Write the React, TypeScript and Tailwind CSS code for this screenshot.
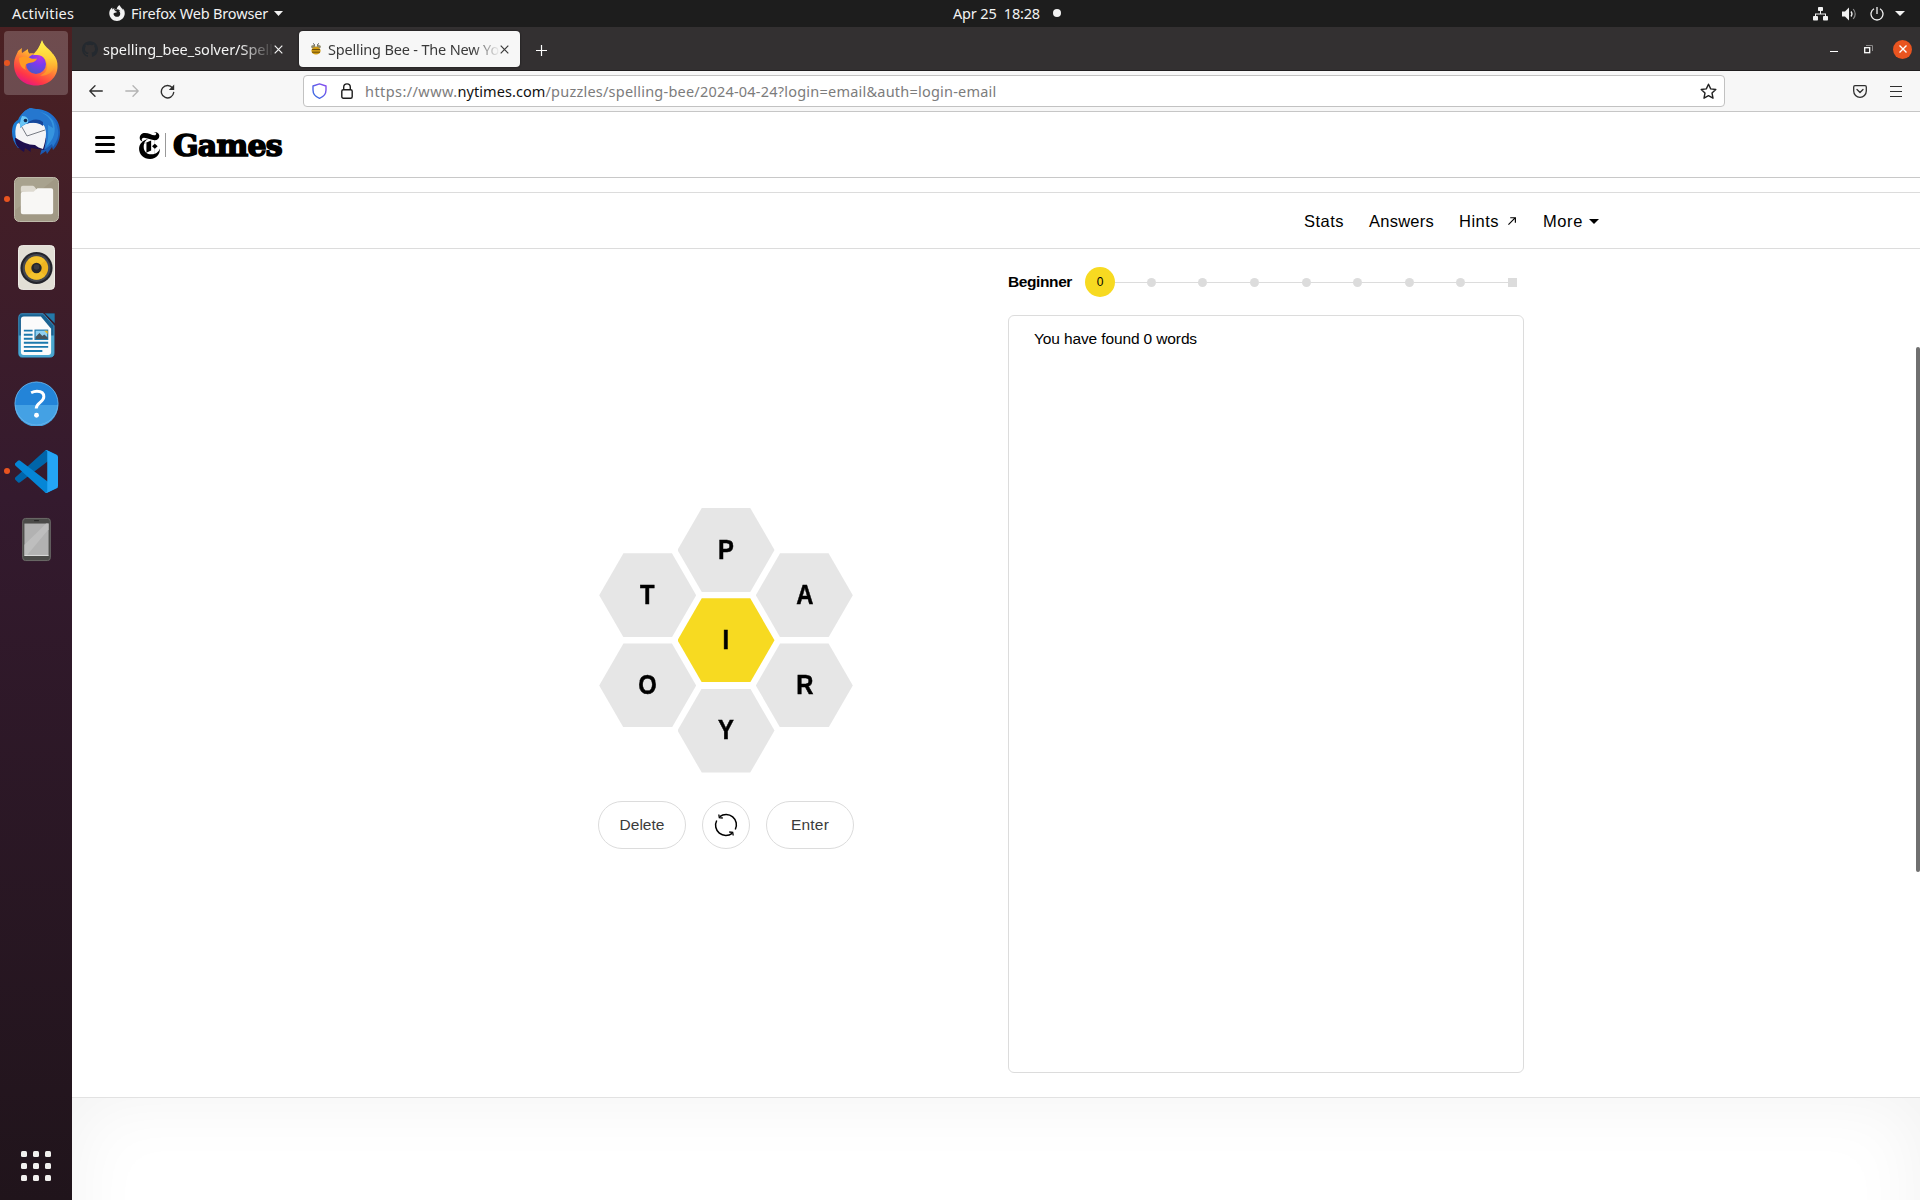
import { useLayoutEffect, useRef, useState } from "react";
import type { ReactNode } from "react";
import { SiNewyorktimes, SiFirefoxbrowser, SiGithub } from "react-icons/si";

const UI = "font-['Noto_Sans','Open_Sans',sans-serif]";
const FRANKLIN = "font-['Liberation_Sans',sans-serif]";

/* Sets text to a fixed measure by spreading the difference over its letters. */
function Fit({ width, className = "", children }: { width: number; className?: string; children: ReactNode }) {
  const ref = useRef<HTMLSpanElement>(null);
  const [spacing, setSpacing] = useState(0);
  useLayoutEffect(() => {
    const el = ref.current;
    if (!el) return;
    const n = (el.textContent || "").length;
    setSpacing((width - el.getBoundingClientRect().width) / n);
  }, [width]);
  return (
    <span ref={ref} className={`inline-block shrink-0 whitespace-pre ${className}`} style={{ letterSpacing: spacing }}>
      {children}
    </span>
  );
}

function TopBar() {
  return (
    <div className={`grid h-[27px] shrink-0 grid-cols-3 items-center bg-[#1d1d1d] text-[14.5px] leading-[24px] text-[#f2f2f2] ${UI}`}>
      <div className="flex h-[27px] items-center pl-3">
        <Fit width={62} className="-mt-[2px]">Activities</Fit>
        <SiFirefoxbrowser className="-mt-px ml-[35px] size-4" />
        <Fit width={137} className="-mt-[2px] ml-[6px]">Firefox Web Browser</Fit>
        <svg className="ml-[6px] h-[5px] w-[9px]" viewBox="0 0 9 5"><path d="M0 0h9L4.500 5z" fill="currentColor" /></svg>
      </div>
      <div className="flex h-[27px] items-center pl-[313px]">
        <Fit width={87} className="-mt-[2px]">Apr 25  18:28</Fit>
        <span className="-mt-px ml-[13px] size-2 rounded-full bg-[#f2f2f2]" />
      </div>
      <div className="flex h-[26px] items-center justify-end pr-[15px]">
        <svg className="h-[14px] w-[15px]" viewBox="0 0 15 14" fill="currentColor">
          <rect x="5" y="0" width="5" height="4" rx=".8" /><rect x="0" y="9" width="5" height="4.500" rx=".8" /><rect x="10" y="9" width="5" height="4.500" rx=".8" />
          <path d="M7 4h1v2.500h5V9h-1V7.500H3V9H2V6.500h5z" />
        </svg>
        <svg className="ml-[14px] h-[14px] w-[15px]" viewBox="0 0 15 14">
          <path d="M0 4.500h3L7 .5v13L3 9.500H0z" fill="currentColor" />
          <path d="M9 4.500q2 2.500 0 5" fill="none" stroke="currentColor" strokeWidth="1.300" />
          <path d="M11.200 2q4 5 0 10" fill="none" stroke="#8a8a8a" strokeWidth="1.200" />
        </svg>
        <svg className="ml-[13px] size-[14px]" viewBox="0 0 14 14" fill="none" stroke="currentColor" strokeWidth="1.300">
          <path d="M4 1.800a6 6 0 1 0 6 0M7 0v7" />
        </svg>
        <svg className="ml-[11px] h-[5px] w-[10px]" viewBox="0 0 10 5"><path d="M0 0h10L5 5z" fill="currentColor" /></svg>
      </div>
    </div>
  );
}

function FirefoxIcon() {
  return (
    <svg className="size-[46px]" viewBox="1 1 46 46">
      <defs>
        <linearGradient id="ff-body" x1=".75" y1=".1" x2=".3" y2="1">
          <stop offset="0" stopColor="#fff44f" /><stop offset=".28" stopColor="#ffbd2e" /><stop offset=".55" stopColor="#ff7139" /><stop offset=".8" stopColor="#ff3647" /><stop offset="1" stopColor="#e31587" />
        </linearGradient>
        <radialGradient id="ff-globe" cx=".7" cy=".15" r=".9">
          <stop offset="0" stopColor="#b833e1" /><stop offset=".45" stopColor="#7a3bee" /><stop offset="1" stopColor="#4b57c8" />
        </radialGradient>
        <linearGradient id="ff-tail" x1=".5" y1="0" x2=".5" y2="1">
          <stop offset="0" stopColor="#fff44f" /><stop offset=".5" stopColor="#ffd23a" /><stop offset="1" stopColor="#ff8a2b" />
        </linearGradient>
      </defs>
      <path d="M10 9c-.5 2-.2 3.500 0 5l6-4c-.2 2 .2 3 1.400 4.500 1.500-.4 3-.3 4.500 0 3-3 5-5 8.100-12.500 1 4 4 7 7 9.500 1 1 2 3 2 4.500l2-1c3.500 4 4.700 8 4.500 12.500C45.500 38 37 46.500 24 46.500S2 37.500 2 25.500C2 19 5 15 6 12z" fill="url(#ff-body)" />
      <circle cx="24" cy="25" r="10" fill="url(#ff-globe)" />
      <path d="M30 1c1 4 4 7 7 9.500 5 4.500 7 9 6 15-1.500 8.500-9 12-15 11 6-2 8-7 7-12-1-5-4-8-10-8.500-2-.2-2.500 0-4 .3C25 12 27.500 8 30 1z" fill="url(#ff-tail)" />
      <path d="M7 19c4-2 8-2 11 0 2 1 5 1 7 .5-1 3-4 4-8 4.500-4 .8-4.500 4-3 7-5-2-7-7-7-12z" fill="#ff9a22" />
    </svg>
  );
}

function ThunderbirdIcon() {
  return (
    <svg className="size-[48px]" viewBox="0 0 48 48">
      <defs>
        <linearGradient id="tb-body" x1="0" y1="0" x2="1" y2="1">
          <stop offset="0" stopColor="#1b8ad8" /><stop offset=".5" stopColor="#1f6fd0" /><stop offset="1" stopColor="#174a9c" />
        </linearGradient>
      </defs>
      <path d="M6 13C9 6 14 3 18 1l3 1c13-1 27 7 27 23 0 8-3 14-7 18l-1-3-5 7-1-3-6 4 2-7H6C2 36 0 31 0 25c0-6 2-10 6-12z" fill="url(#tb-body)" />
      <path d="M3 31c0 7 4 11 9 14l1-4 6 4c-1-2 0-3 0-4l14 2 2-12z" fill="#1d0e4e" />
      <path d="M5 17c6-4 22-2 28 2 2 6 1 14-2 23-3-1-6-2-8-4-7 0-13-3-19-7-1-5-1-9 1-14z" fill="#f4f4f6" />
      <path d="M7 15l8 14 18-6" fill="none" stroke="#777b84" strokeWidth="1" />
      <path d="M19 1C11 3 8 9 9 15l-1 6c5-5 12-7 23-4 4 5 4 14 1 26l8-6 1 3c4-6 6-10 5-17C44 10 33 3 19 1z" fill="#2577cf" />
      <path d="M14 17c6-2 12-2 17 2v-4c-5-4-12-3-17 2z" fill="#16479b" />
      <path d="M10 9C8 13 8 17 8 21c3-3 5-4 8-5 1-4-1-7-6-7z" fill="#67c5f5" />
      <path d="M28 5c8 3 12 8 13 16l-5-3c0 8 1 14-2 22 8-8 11-16 7-26-3-5-8-8-13-9z" fill="#3fa4e8" opacity=".65" />
      <circle cx="13.500" cy="13.500" r="1.800" fill="#102a51" />
    </svg>
  );
}

function FilesIcon() {
  return (
    <svg className="size-[45px]" viewBox="0 0 46 46">
      <rect x=".5" y=".5" width="45" height="45" rx="5" fill="#a19985" stroke="#c2bdad" />
      <path d="M5 1h38L1 34V6z" fill="#aea895" opacity=".6" />
      <path d="M7 15v-4q0-2 2-2h10q1 0 2 1l3 4h13q2 0 2 2z" fill="#dedad0" />
      <path d="M9 15h11l4-3.500h14q2 0 2 2V36q0 2-2 2H9q-2 0-2-2V17q0-2 2-2z" fill="#f8f7f5" />
    </svg>
  );
}

function RhythmboxIcon() {
  return (
    <svg className="h-[45px] w-[37px]" viewBox="0 0 38 46">
      <rect x=".5" y=".5" width="37" height="45" rx="4" fill="#e2dfd6" stroke="#f1efe9" />
      <circle cx="19" cy="23.500" r="16.500" fill="#23242b" />
      <circle cx="19" cy="23.500" r="14.300" fill="#454850" />
      <circle cx="19" cy="23.500" r="12" fill="#efb521" />
      <path d="M19 23.500L10 15.500a12 12 0 0 1 18 0zM19 23.500l-9 8a12 12 0 0 0 18 0z" fill="#f7cb34" opacity=".6" />
      <circle cx="19" cy="23.500" r="5.300" fill="#26272b" />
      <circle cx="19" cy="22.500" r="2.800" fill="#3b3c40" />
    </svg>
  );
}

function WriterIcon() {
  return (
    <svg className="h-[45px] w-[37px]" viewBox="0 0 38 46">
      <path d="M4 .7h22L37 13v28q0 4.200-4 4.200H4Q.8 45.200.8 41V5Q.8.700 4 .7z" fill="#1a6291" stroke="#3c93c3" />
      <path d="M.8 23H37v18q0 4.200-4 4.200H4Q.8 45.200.8 41z" fill="#4aa6cf" />
      <path d="M6 3.500h17.500L34 16v24q0 3-3 3H6q-3 0-3-3V6.500q0-3 3-3z" fill="#fbfbfb" />
      <path d="M27 0h11v11z" fill="#2478a8" stroke="#2c1629" strokeWidth=".6" />
      <path d="M6 17h9v2H6zM6 21.200h9v2H6zM6 25.400h9v2H6zM6 29.500h25v2H6zM6 33.700h25v2H6zM6 38h19v2H6z" fill="#1b79ad" />
      <rect x="17.500" y="17.500" width="13" height="9.500" fill="#8fd0f1" stroke="#1b79ad" strokeWidth="1.200" />
      <path d="M18 26.500v-2l4-4 3 3 2-1.500 3.500 3v1.500z" fill="#47555d" /><path d="M27 18h3.500v3.500z" fill="#f3b71d" />
    </svg>
  );
}

function HelpIcon() {
  return (
    <svg className="size-[45px]" viewBox="0 0 46 46">
      <circle cx="23" cy="23" r="22.200" fill="#2384d8" />
      <path d="M.8 24.500h44.400a22.200 22.200 0 0 1-44.400 0z" fill="#44a1e4" />
      <circle cx="23" cy="23" r="22" fill="none" stroke="#6fb7ea" strokeWidth=".8" />
      <path d="M17.500 12q3-1.500 6-1.500c4.500 0 7 2.300 7 5.600 0 5.400-7.800 6-7.800 11.900" fill="none" stroke="#fff" strokeWidth="3" />
      <circle cx="23" cy="35" r="2.500" fill="#fff" />
    </svg>
  );
}

function CodeIcon() {
  return (
    <svg className="size-[43px]" viewBox="0 0 100 100">
      <path d="M96.500 10.800L75.900.9a6.200 6.200 0 0 0-7.100 1.200L1.300 63.600a4.200 4.200 0 0 0 0 6.200l5.500 5a4.200 4.200 0 0 0 5.300.2L93.400 13.400c2.700-2.100 6.600-.1 6.600 3.300v-.2c0-2.500-1.400-4.700-3.500-5.700z" fill="#0065a9" />
      <path d="M96.500 89.200l-20.600 9.900a6.200 6.200 0 0 1-7.100-1.200L1.300 36.400a4.200 4.200 0 0 1 0-6.200l5.500-5a4.200 4.200 0 0 1 5.300-.2l81.300 61.600c2.700 2.100 6.600.1 6.600-3.300v.2c0 2.500-1.400 4.700-3.500 5.700z" fill="#0586d6" />
      <path d="M75.900 99.100a6.200 6.200 0 0 1-7.100-1.200c2.300 2.300 6.200.7 6.200-2.600V4.700c0-3.300-3.900-4.900-6.200-2.600A6.200 6.200 0 0 1 75.900.9l20.600 9.900a6.200 6.200 0 0 1 3.500 5.600v67.200a6.200 6.200 0 0 1-3.500 5.600z" fill="#24a5f4" />
    </svg>
  );
}

function PhoneIcon() {
  return (
    <svg className="h-[45px] w-[29px]" viewBox="0 0 30 45">
      <rect x=".7" y=".7" width="28.600" height="43.600" rx="3" fill="#4b4b49" stroke="#6d6d6a" />
      <rect x="2.500" y="6" width="25" height="33" fill="#b2b2b2" />
      <path d="M2.500 39V28L25 6h2.500v6L5 39z" fill="#bebebe" />
      <path d="M2.500 39h25" stroke="#e2e2e2" /><path d="M12.500 3h5" stroke="#222" />
    </svg>
  );
}

const dockItems = [
  { icon: <FirefoxIcon />, running: true, active: true },
  { icon: <ThunderbirdIcon /> },
  { icon: <FilesIcon />, running: true },
  { icon: <RhythmboxIcon /> },
  { icon: <WriterIcon /> },
  { icon: <HelpIcon /> },
  { icon: <CodeIcon />, running: true },
  { icon: <PhoneIcon /> },
];

function Dock() {
  return (
    <div className="flex w-[72px] shrink-0 flex-col justify-between bg-linear-to-b from-[#4b2022] via-[#341a2e] via-40% to-[#20141b] pt-1 pb-[19px]">
      <div className="flex flex-col gap-1">
        {dockItems.map((item, i) => (
          <div key={i} className={`relative mx-1 flex h-16 items-center justify-center rounded ${item.active ? "bg-white/20" : ""}`}>
            {item.icon}
            {item.running && <span className="absolute left-0 top-[29px] size-[6px] rounded-full bg-[#e95420]" />}
          </div>
        ))}
      </div>
      <div className="mx-auto grid grid-cols-3 gap-[6px]">
        {Array.from({ length: 9 }, (_, i) => <span key={i} className="size-[6px] rounded-[1.5px] bg-[#f1f0ee]" />)}
      </div>
    </div>
  );
}

function Cross() {
  return <svg className="size-[9px] shrink-0" viewBox="0 0 9 9"><path d="M.7.700l7.600 7.600M8.300.700L.7 8.300" stroke="currentColor" strokeWidth="1.200" /></svg>;
}

function TabStrip() {
  return (
    <div className={`flex h-[44px] shrink-0 items-start border-b border-[#1f1d1e] bg-[#333031] pt-1 text-[14.5px] leading-9 ${UI}`}>
      <div className="flex h-9 w-[227px] items-center pl-[10px] text-[#f4f4f4]">
        <SiGithub className="size-[16px] shrink-0 text-[#24292f]" />
        <div className="ml-[5px] w-[171px] mask-r-from-80%">
          <Fit width={170}>spelling_bee_solver/Spell</Fit>
        </div>
        <Cross />
      </div>
      <div className="flex h-9 w-[221px] items-center rounded bg-[#f7f7f7] pl-3 text-[#3a3a3a] shadow-[0_0_2px_#111]">
        <svg className="h-[12px] w-[10px] shrink-0" viewBox="0 0 10 12">
          <path d="M3.500 3.500V1.500L2 .5M6.500 3.500V1.500L8 .5" stroke="#555" fill="none" />
          <ellipse cx="2.300" cy="3.800" rx="2.200" ry="1.700" fill="#8f8a6c" /><ellipse cx="7.700" cy="3.800" rx="2.200" ry="1.700" fill="#8f8a6c" />
          <ellipse cx="5" cy="7.700" rx="4.600" ry="3.900" fill="#cf9a14" />
          <path d="M1 6.500h8M1 9.200h8" stroke="#6b4d0a" />
        </svg>
        <div className="ml-[7px] w-[172px] mask-r-from-84% mask-r-to-100%">
          <Fit width={171}>Spelling Bee - The New Yo</Fit>
        </div>
        <Cross />
      </div>
      <svg className="mt-[14px] ml-4 size-[11px]" viewBox="0 0 11 11"><path d="M5.500 0v11M0 5.500h11" stroke="#fff" strokeWidth="1.200" /></svg>
      <div className="ml-auto flex h-9 items-center pr-2">
        <span className="mt-[5px] h-px w-2 bg-white" />
        <svg className="ml-[26px] size-[9px]" viewBox="0 0 9 9" fill="none"><path d="M2 .5h6.500V6" stroke="#8b8989" /><rect x=".7" y="2.700" width="5" height="5" stroke="#fff" strokeWidth="1.300" /></svg>
        <span className="ml-5 flex size-[19px] items-center justify-center rounded-full bg-[#e95420] text-white">
          <svg className="size-2" viewBox="0 0 8 8"><path d="M.5.500l7 7M7.500.500l-7 7" stroke="currentColor" strokeWidth="1.400" /></svg>
        </span>
      </div>
    </div>
  );
}

function Toolbar() {
  return (
    <div className="flex h-[41px] shrink-0 items-center border-b border-[#c6c6c6] bg-[#f7f7f7] text-[#2f2f2f]">
      <svg className="ml-[17px] h-3 w-[14px]" viewBox="0 0 14 12" fill="none" stroke="currentColor" strokeWidth="1.300" strokeLinecap="round" strokeLinejoin="round"><path d="M6 .7L.8 6 6 11.300M.8 6h12.500" /></svg>
      <svg className="ml-[22px] h-3 w-[14px] text-[#b4b4b4]" viewBox="0 0 14 12" fill="none" stroke="currentColor" strokeWidth="1.300" strokeLinecap="round" strokeLinejoin="round"><path d="M8 .7L13.200 6 8 11.300M13.200 6H.8" /></svg>
      <svg className="ml-[21px] size-[15px]" viewBox="0 0 15 15"><path d="M12.500 4A6.200 6.200 0 1 0 13.700 8.500" fill="none" stroke="currentColor" strokeWidth="1.400" strokeLinecap="round" /><path d="M14.200.500v5.500H8.800z" fill="currentColor" /></svg>
      <div className="ml-[128px] flex h-8 w-[1422px] items-center rounded border border-[#c2c2c2] bg-white">
        <svg className="ml-2 h-4 w-[15px]" viewBox="0 0 15 16" fill="none">
          <defs><linearGradient id="shield" x1="0" y1="1" x2="1" y2="0"><stop offset="0" stopColor="#2f6fe0" /><stop offset="1" stopColor="#8a4bf0" /></linearGradient></defs>
          <path d="M7.500.9L14 3v4c0 4-3 7-6.500 8.300C4 14 1 11 1 7V3z" stroke="url(#shield)" strokeWidth="1.400" strokeLinejoin="round" />
        </svg>
        <svg className="ml-[14px] h-4 w-3" viewBox="0 0 12 16" fill="none" stroke="#1c1c1c" strokeWidth="1.400"><rect x=".8" y="6.800" width="10.400" height="8.400" rx="1.500" /><path d="M2.700 6.800V4.200a3.300 3.300 0 0 1 6.600 0v2.600" /></svg>
        <div className={`ml-3 text-[14.5px] leading-7 text-[#7c7c7c] ${UI}`}>
          <Fit width={92.500}>https://www.</Fit><Fit width={88} className="text-[#111]">nytimes.com</Fit><Fit width={451}>/puzzles/spelling-bee/2024-04-24?login=email&amp;auth=login-email</Fit>
        </div>
        <svg className="mr-[7px] ml-auto size-[17px]" viewBox="0 0 17 17" fill="none" stroke="#222" strokeWidth="1.400" strokeLinejoin="round"><path d="M8.500 1.200l2.200 4.700 5.100.6-3.800 3.500 1 5.200-4.500-2.600L4 15.200l1-5.200L1.200 6.500l5.100-.6z" /></svg>
      </div>
      <svg className="ml-[128px] h-[13px] w-[14px]" viewBox="0 0 14 13" fill="none" stroke="currentColor" strokeWidth="1.300" strokeLinecap="round" strokeLinejoin="round"><path d="M2 .7h10q1.300 0 1.300 1.300v4a6.300 6.300 0 0 1-12.600 0V2Q.7.700 2 .7zM4 4.500l3 3 3-3" /></svg>
      <svg className="ml-[23px] h-[11px] w-3" viewBox="0 0 12 11" fill="currentColor"><path d="M0 0h12v1H0zM0 5h12v1H0zM0 10h12v1H0z" /></svg>
    </div>
  );
}

function SiteHeader() {
  return (
    <div className="flex h-[66px] shrink-0 items-start border-b border-[#c8c8c8] pt-5 pl-[23px]">
      <div className="mt-1 flex w-5 flex-col gap-1">
        <span className="h-[3px] rounded-sm bg-black" /><span className="h-[3px] rounded-sm bg-black" /><span className="h-[3px] rounded-sm bg-black" />
      </div>
      <SiNewyorktimes className="ml-[21px] size-[27px] text-black" />
      <span className="mt-[1px] ml-[2px] h-6 w-px bg-[#999]" />
      <Fit width={109} className="ml-[7px] font-['DejaVu_Serif',serif] text-[30px] leading-7 font-bold text-black [-webkit-text-stroke:1.6px_black]">Games</Fit>
    </div>
  );
}

function NavRow() {
  return (
    <div className={`mt-[14px] flex h-[57px] shrink-0 items-center border-y border-[#dcdcdc] pt-px pl-[1232px] text-[16.5px] text-black ${FRANKLIN}`}>
      <Fit width={40}>Stats</Fit>
      <Fit width={65} className="ml-[25px]">Answers</Fit>
      <Fit width={40} className="ml-[25px]">Hints</Fit>
      <svg className="ml-[9px] size-2" viewBox="0 0 9 9" fill="none" stroke="currentColor" strokeWidth="1.300"><path d="M.5 8.500L8 1M2.500.8h5.800v5.700" /></svg>
      <Fit width={40} className="ml-[27px]">More</Fit>
      <svg className="ml-[6px] h-[5px] w-[10px]" viewBox="0 0 10 5"><path d="M0 0h10L5 5z" fill="currentColor" /></svg>
    </div>
  );
}

function Cell({ letter, center = false }: { letter: string; center?: boolean }) {
  return (
    <div className={`flex h-[84px] w-[97px] items-center justify-center text-[27px] leading-none font-bold text-black [clip-path:polygon(25%_0,75%_0,100%_50%,75%_100%,25%_100%,0_50%)] ${center ? "bg-[#f7da21]" : "bg-[#e6e6e6]"}`}>
      <span className="scale-x-88 [-webkit-text-stroke:0.5px_black]">{letter}</span>
    </div>
  );
}

function Hive() {
  return (
    <div className={`flex w-[256px] flex-col items-center gap-[28px] ${FRANKLIN}`}>
      <div className="flex items-center">
        <div className="flex flex-col gap-[6.3px]"><Cell letter="T" /><Cell letter="O" /></div>
        <div className="-mx-[18.7px] flex flex-col gap-[6.3px]"><Cell letter="P" /><Cell letter="I" center /><Cell letter="Y" /></div>
        <div className="flex flex-col gap-[6.3px]"><Cell letter="A" /><Cell letter="R" /></div>
      </div>
      <div className="flex gap-4 text-[15.5px] text-[#3b3b3b]">
        <div className="flex h-12 w-22 items-center justify-center rounded-full border border-[#dcdcdc]"><Fit width={45}>Delete</Fit></div>
        <div className="flex size-12 items-center justify-center rounded-full border border-[#dcdcdc]">
          <svg className="size-6" viewBox="0 0 24 24" fill="none" stroke="#000" strokeWidth="1.500">
            <path d="M5.800 3.700A10.300 10.300 0 0 1 21.300 16.500M18.200 20.300A10.300 10.300 0 0 1 2.700 7.500" />
            <path d="M4.800 1.500l.5 3.200 3.500.3M19.200 22.500l-.5-3.200-3.500-.3" strokeWidth="1.300" />
          </svg>
        </div>
        <div className="flex h-12 w-22 items-center justify-center rounded-full border border-[#dcdcdc]"><Fit width={38}>Enter</Fit></div>
      </div>
    </div>
  );
}

function Progress() {
  return (
    <div className="flex h-[30px] items-center">
      <Fit width={64} className="text-[15.5px] font-bold text-black">Beginner</Fit>
      <span className="z-10 ml-[13px] flex size-[30px] shrink-0 items-center justify-center rounded-full bg-[#f7da21] text-[12px] text-black">0</span>
      <div className="flex flex-1 items-center pr-[7px]">
        <span className="h-px flex-1 bg-[#dcdcdc]" />
        {Array.from({ length: 8 }, (_, i) => (
          <div key={i} className="flex items-center">
            {i > 0 && <span className="h-px w-[42.6px] bg-[#dcdcdc]" />}
            <span className={`size-[9px] bg-[#dcdcdc] ${i < 7 ? "rounded-full" : ""}`} />
          </div>
        ))}
      </div>
    </div>
  );
}

function Game() {
  return (
    <div className="flex h-[849px] shrink-0 items-start border-b border-[#e2e2e2]">
      <div className="flex w-[936px] justify-end pt-[259px] pr-[154px]">
        <Hive />
      </div>
      <div className={`flex w-[516px] flex-col gap-[18px] pt-[18px] ${FRANKLIN}`}>
        <Progress />
        <div className="h-[758px] rounded-md border border-[#dcdcdc] px-[25px] pt-[13px] text-[15.5px] leading-5 text-black">
          <Fit width={163}>You have found 0 words</Fit>
        </div>
      </div>
    </div>
  );
}

export default function App() {
  return (
    <div className="flex h-[1200px] w-[1920px] flex-col overflow-hidden bg-white">
      <TopBar />
      <div className="flex min-h-0 flex-1">
        <Dock />
        <div className="relative flex min-w-0 flex-1 flex-col overflow-hidden">
          <TabStrip />
          <Toolbar />
          <SiteHeader />
          <NavRow />
          <Game />
          <div className="h-[300px] shrink-0 bg-white shadow-[inset_0_0_75px_rgba(0,0,0,0.055)]" />
          <span className="absolute top-[320px] right-0 h-[525px] w-1 rounded-sm bg-[#707070]" />
        </div>
      </div>
    </div>
  );
}
